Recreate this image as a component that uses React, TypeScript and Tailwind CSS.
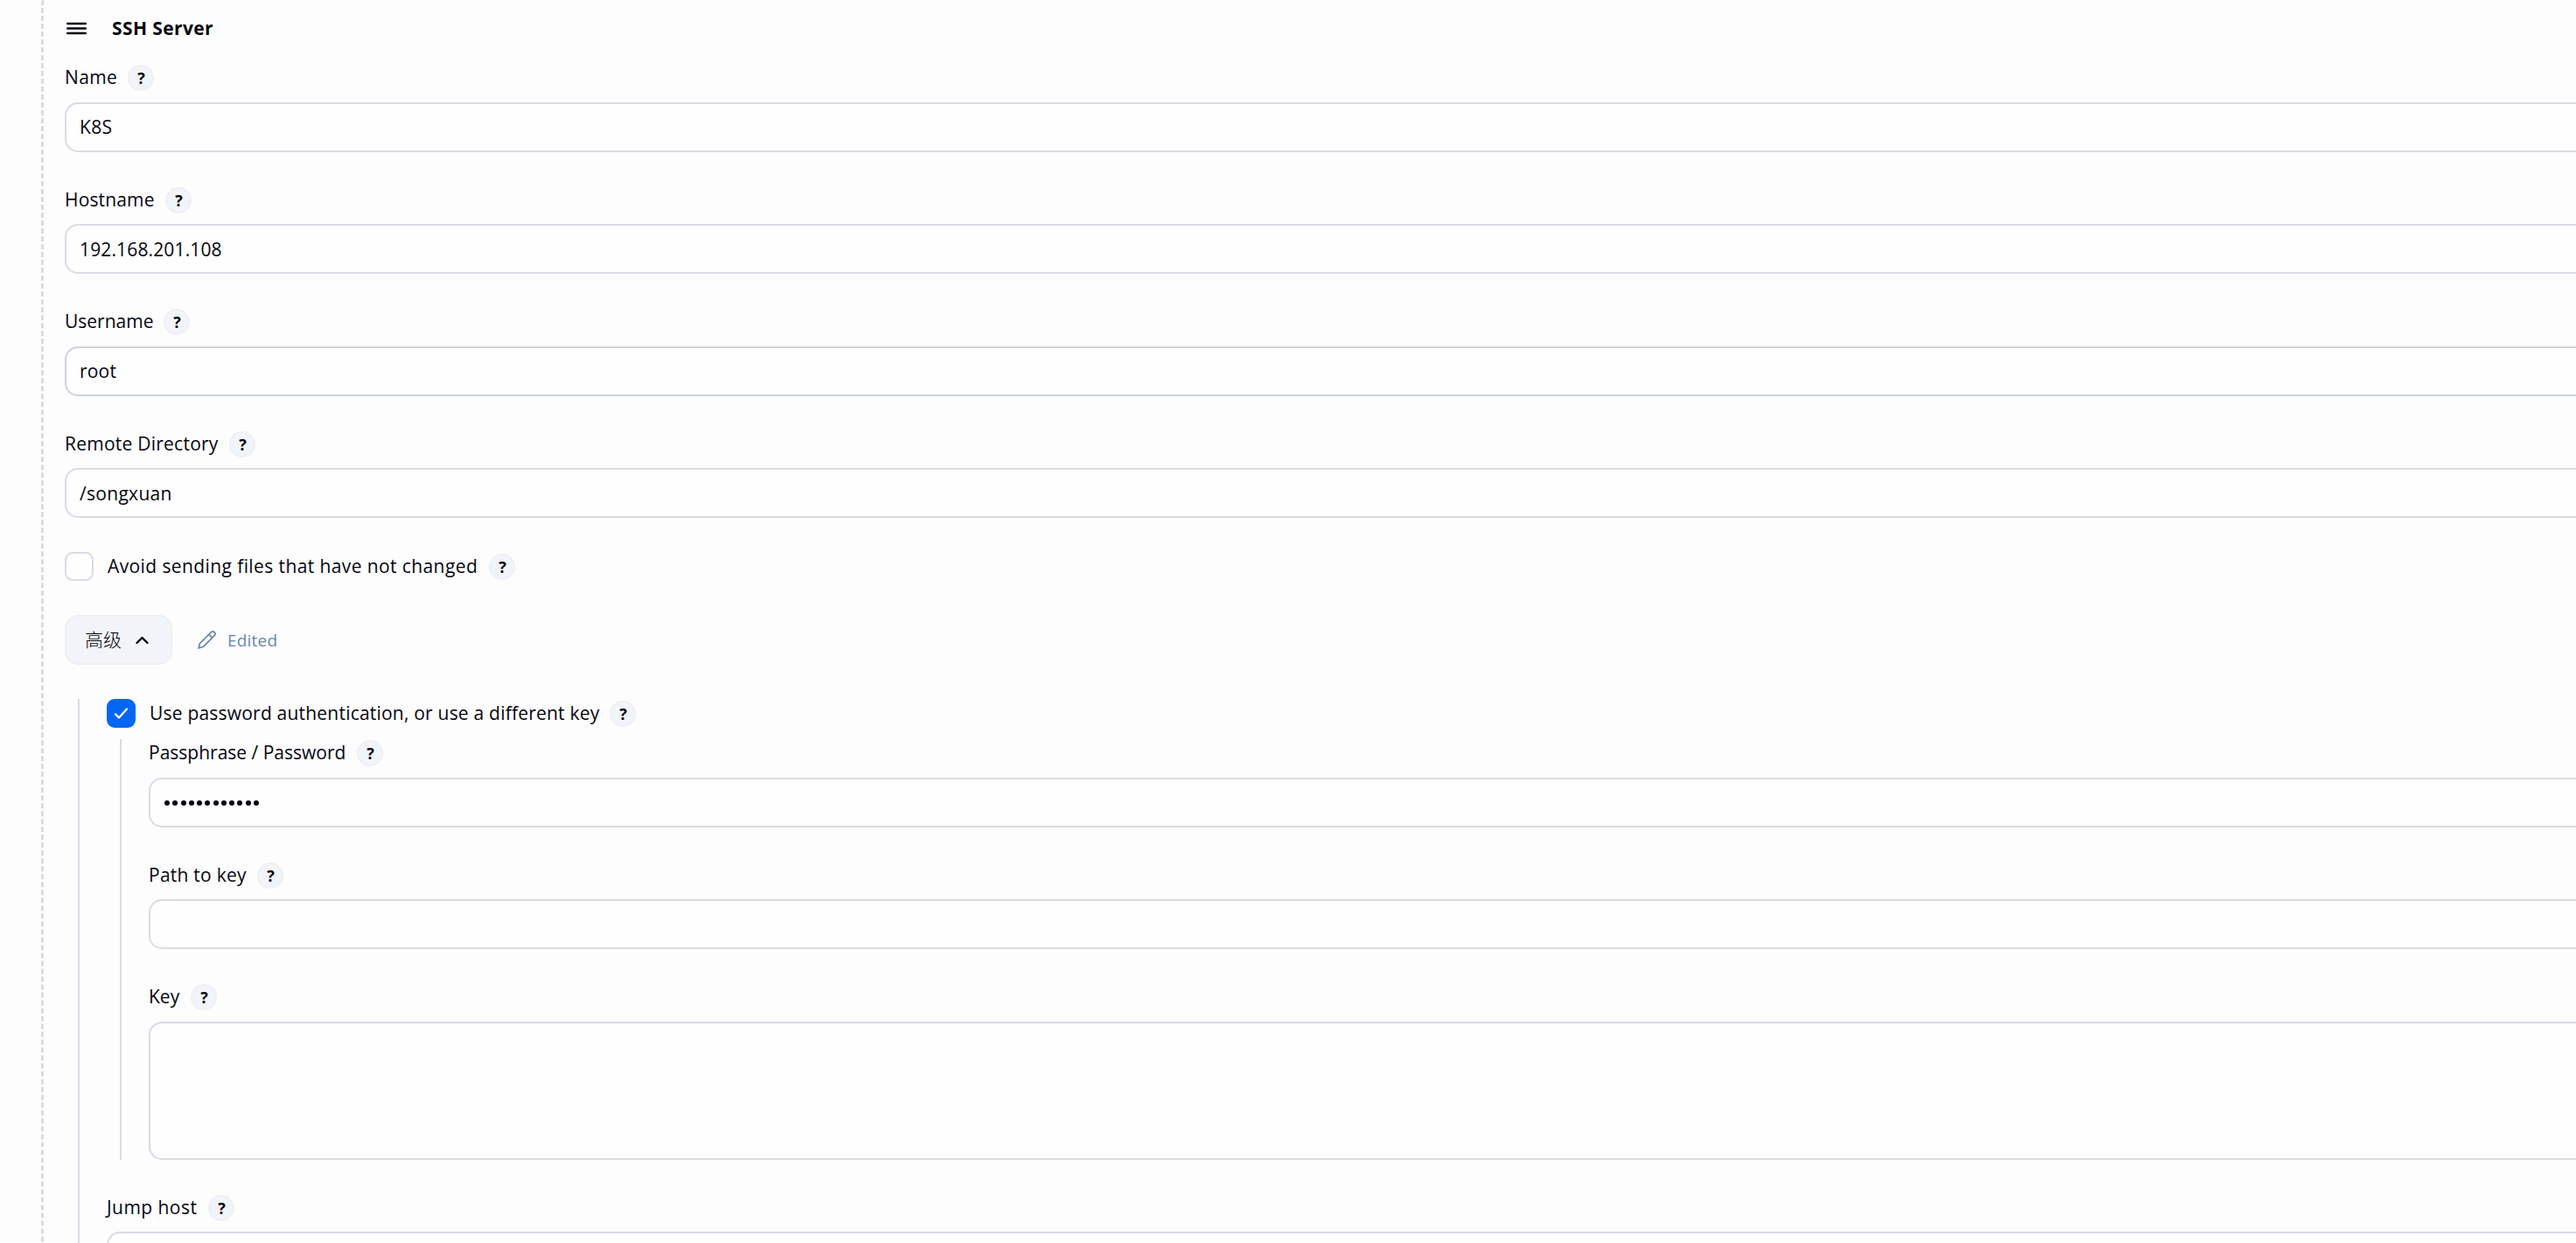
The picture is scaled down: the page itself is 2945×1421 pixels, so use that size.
import React from "react";

function Help() {
  return (
    <span className="flex size-[30px] shrink-0 items-center justify-center rounded-full border-2 border-[#edf0f4] bg-[#f1f5f9] pl-px text-[18px] font-bold leading-none text-[#05050f]">
      ?
    </span>
  );
}

function Label({ text, width }: { text: string; width: string }) {
  return (
    <div className="flex h-[30px] items-center">
      <span className={"shrink-0 whitespace-nowrap " + width}>{text}</span>
      <Help />
    </div>
  );
}

const field =
  "w-full rounded-l-[15px] border-2 border-r-0 bg-[#fefefe] pl-[15px] flex items-center ";
const line = "border-[#d9dce6] ";

export default function App() {
  return (
    <div className="flex h-[1421px] w-[2945px] overflow-hidden bg-[#fdfdfe] pl-[47px] font-['Open_Sans','Noto_Sans_CJK_SC',sans-serif] text-[21px] text-[#05050f]">
      <div className="-mt-3 h-[1460px] w-full shrink-0 rounded-tl-[18px] border-l-[3px] border-dashed border-[#dadce4] pl-6">
        <div className="mt-[30px] flex h-[30px] items-center">
          <svg className="ml-[2px] mr-[29px] h-[24px] w-[23px]" viewBox="0 0 23 24" fill="none" stroke="#05050f" strokeWidth="2.4" strokeLinecap="round">
            <path d="M1.2 6h20.6M1.2 11.5h20.6M1.2 17h20.6" />
          </svg>
          <span className="font-bold tracking-[0.4px]">SSH Server</span>
        </div>
        <div className="mt-[26px]"><Label text="Name" width="w-[72px] tracking-[0.4px]" /></div>
        <div className={field + line + "mt-[13px] h-[57px] tracking-[0.3px]"}>K8S</div>
        <div className="mt-[40px]"><Label text="Hostname" width="w-[115px] tracking-[0.15px]" /></div>
        <div className={field + line + "mt-[12px] h-[57px] pt-[2px] tracking-[0.14px]"}>192.168.201.108</div>
        <div className="mt-[40px]"><Label text="Username" width="w-[113px]" /></div>
        <div className={field + "mt-[13px] h-[57px] border-[#cdd3e2] tracking-[0.2px]"}>root</div>
        <div className="mt-[40px]"><Label text="Remote Directory" width="w-[188px] tracking-[0.24px]" /></div>
        <div className={field + line + "mt-[12px] h-[57px] pt-[2px] tracking-[0.3px]"}>/songxuan</div>
        <div className="mt-[39px] flex h-[33px] items-center">
          <span className="mr-4 size-[33px] rounded-[9px] border-2 border-[#d9dce6] bg-[#fefefe]" />
          <Label text="Avoid sending files that have not changed" width="w-[436px] tracking-[0.4px]" />
        </div>
        <div className="mt-[39px] flex h-[57px] items-center">
          <div className="flex h-full w-[123px] items-center rounded-[15px] border-2 border-[#edf0f4] bg-[#f1f5f9] pl-[21px]">
            <span className="w-[57px] font-light">高级</span>
            <svg className="h-[12px] w-[17px]" viewBox="0 0 17 12" fill="none" stroke="#05050f" strokeWidth="2.4" strokeLinecap="round" strokeLinejoin="round">
              <path d="M2.500 9L8.500 3L14.500 9" />
            </svg>
          </div>
          <svg className="ml-[29px] mr-[13px] size-[21px]" viewBox="0 0 21 21" fill="none" stroke="#6987b0" strokeWidth="1.7" strokeLinejoin="round">
            <path d="M1 20l1.500-5.500L15.300 1.800a2.600 2.600 0 0 1 3.800 3.800L6.500 18.300zM12.800 4.300l3.800 3.800" />
          </svg>
          <span className="pt-px text-[19px] font-medium tracking-[0.2px] text-[#6987b0]">Edited</span>
        </div>
        <div className="ml-[15px] mt-[39px] border-l-2 border-[#d9dce6] pl-[31px]">
          <div className="flex h-[33px] items-center">
            <span className="mr-4 flex size-[33px] items-center justify-center rounded-[9px] bg-[#0566f5]">
              <svg className="size-[17px]" viewBox="0 0 17 17" fill="none" stroke="white" strokeWidth="2.3" strokeLinecap="round" strokeLinejoin="round">
                <path d="M2 9.500L6 13.500L15 3.500" />
              </svg>
            </span>
            <Label text="Use password authentication, or use a different key" width="w-[526px] tracking-[0.21px]" />
          </div>
          <div className="ml-[15px] mt-[13px] h-[481px] border-l-2 border-[#d9dce6] pl-[31px] pt-px">
            <Label text="Passphrase / Password" width="w-[238px]" />
            <div className={field + line + "mt-[13px] h-[57px] gap-[3.25px]"}>
              {Array.from({ length: 12 }, (_, i) => (
                <span key={i} className="relative left-px size-[6px] rounded-full bg-[#05050f]" />
              ))}
            </div>
            <div className="mt-[40px]"><Label text="Path to key" width="w-[124px] tracking-[0.25px]" /></div>
            <div className={field + line + "mt-[12px] h-[57px]"} />
            <div className="mt-[40px]"><Label text="Key" width="w-[48px]" /></div>
            <div className={field + line + "mt-[13px] h-[158px]"} />
          </div>
          <div className="mt-[40px]"><Label text="Jump host" width="w-[116px] tracking-[0.45px]" /></div>
          <div className={field + line + "mt-[12px] h-[57px]"} />
        </div>
      </div>
    </div>
  );
}
